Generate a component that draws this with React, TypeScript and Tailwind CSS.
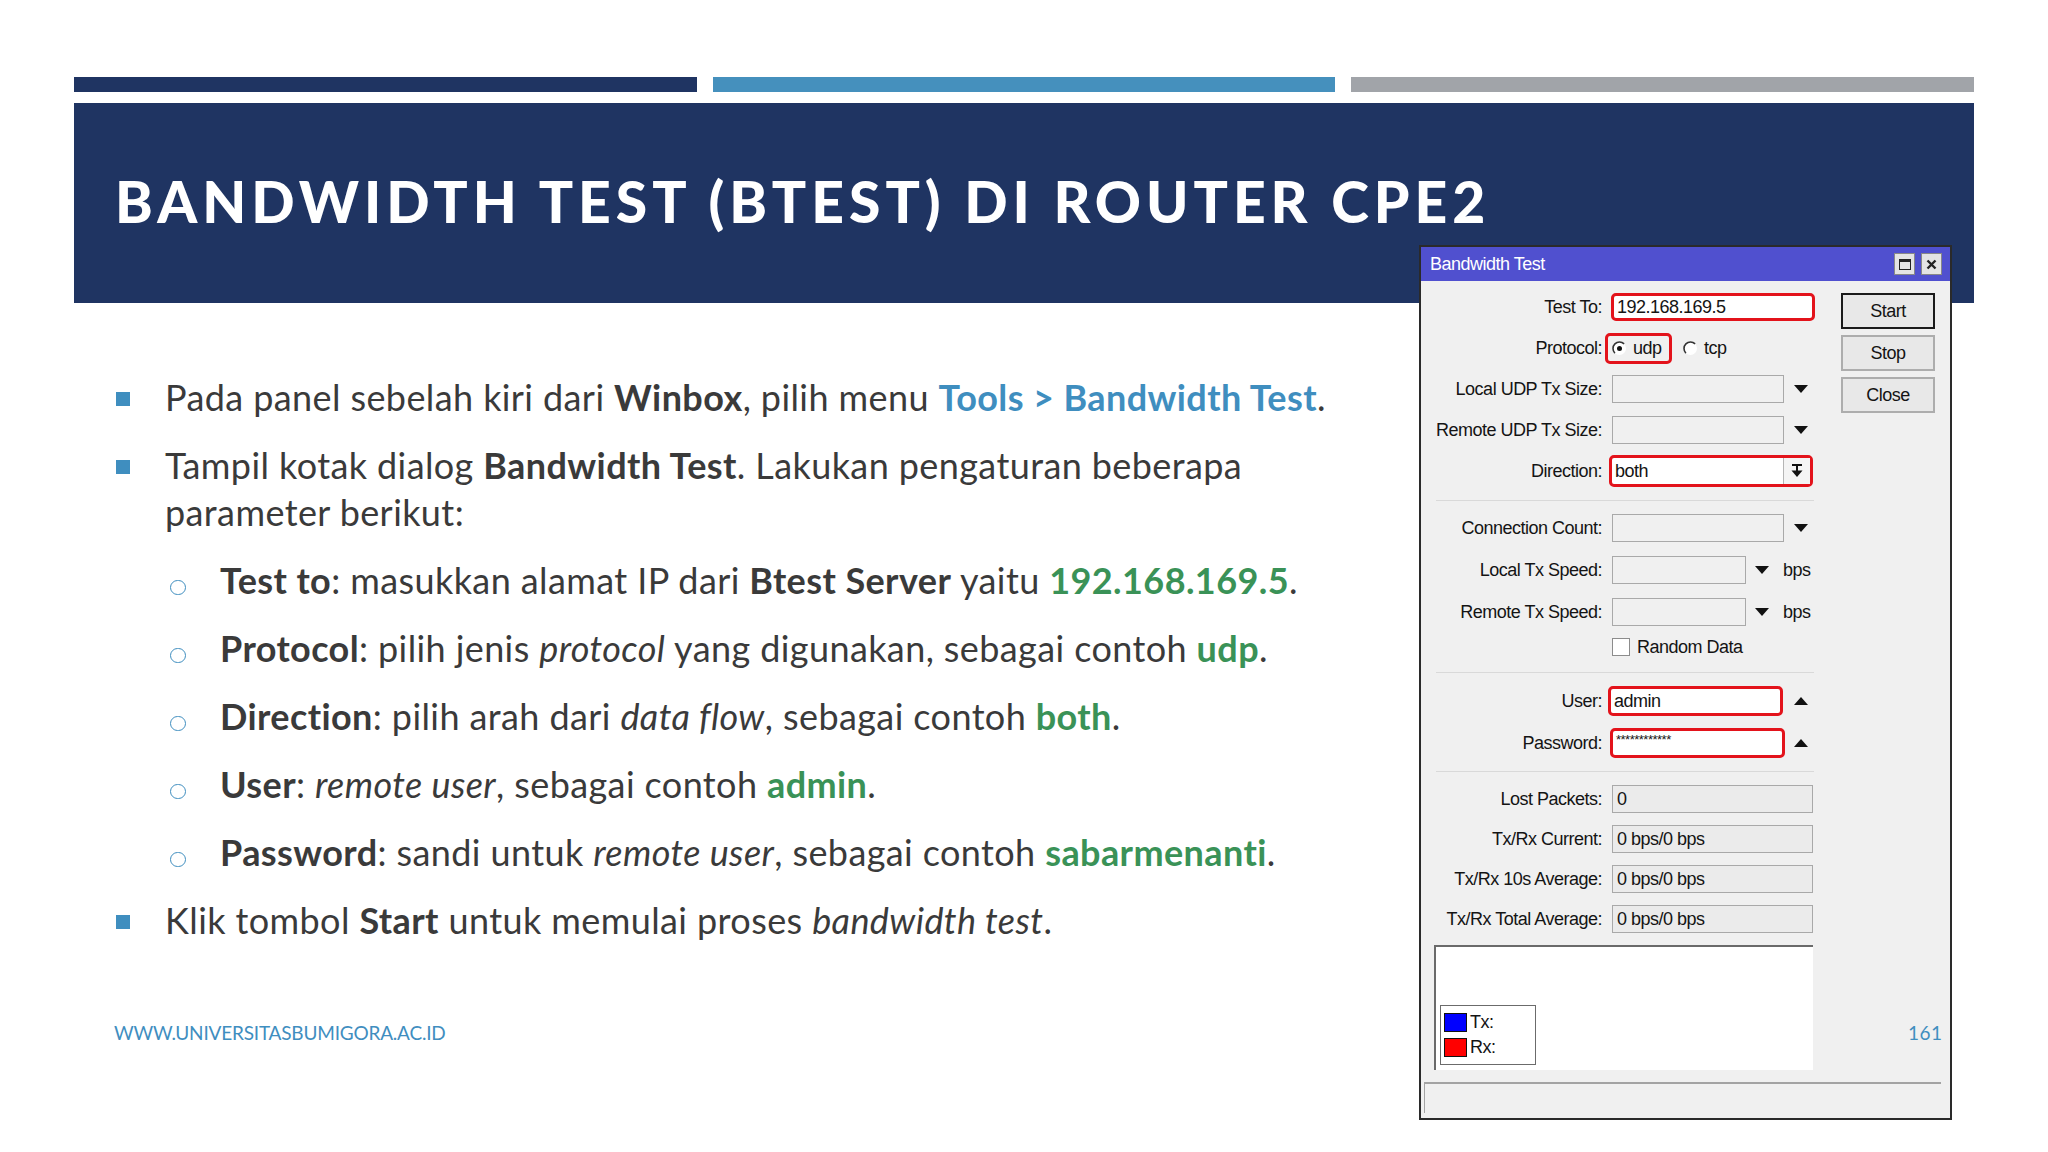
import type { ReactNode } from "react";

const sans = "font-['Lato','Open_Sans',sans-serif]";
const win = "font-['Liberation_Sans',Arial,sans-serif]";

function Bold({ children }: { children: ReactNode }) {
  return <span className="font-bold">{children}</span>;
}
function Green({ children }: { children: ReactNode }) {
  return <span className="font-bold text-[#3a9257]">{children}</span>;
}
function Blue({ children }: { children: ReactNode }) {
  return <span className="font-bold text-[#3f8ebf]">{children}</span>;
}

function Bullet({ children }: { children: ReactNode }) {
  return (
    <div className="flex mt-[21px] first:mt-0">
      <div className="w-[50px] h-[47px] flex items-center shrink-0">
        <span className="ml-[1px] mt-[2px] w-[14px] h-[14px] bg-[#3f8ebf]" />
      </div>
      <div className="whitespace-nowrap">{children}</div>
    </div>
  );
}

function SubBullet({ children }: { children: ReactNode }) {
  return (
    <div className="flex mt-[21px] pl-[55px]">
      <div className="w-[50px] h-[47px] shrink-0">
        <span className="block mt-[23px] w-[16px] h-[15px] rounded-full border-[1.5px] border-[#3f8ebf]" />
      </div>
      <div className="whitespace-nowrap">{children}</div>
    </div>
  );
}

function DownArrow() {
  return (
    <svg width="14" height="8" viewBox="0 0 14 8" className="shrink-0">
      <path d="M0 0H14L7 8Z" fill="#111" />
    </svg>
  );
}
function UpArrow() {
  return (
    <svg width="14" height="8" viewBox="0 0 14 8" className="shrink-0">
      <path d="M0 8H14L7 0Z" fill="#111" />
    </svg>
  );
}

function Row({
  label,
  children,
  className = "mt-[13px]",
  h = "h-[28px]",
}: {
  label: string;
  children?: ReactNode;
  className?: string;
  h?: string;
}) {
  return (
    <div className={`flex items-center ${h} ${className}`}>
      <div className="w-[166px] flex justify-end whitespace-nowrap shrink-0">{label}</div>
      <div className="ml-[10px] flex items-center flex-1 h-full">{children}</div>
    </div>
  );
}

function Field({ w, value, tone = "plain" }: { w: string; value?: string; tone?: "plain" | "ro" }) {
  return (
    <div
      className={`${w} h-[28px] border-[1.5px] border-[#a9a9a9] flex items-center pl-[4px] whitespace-nowrap ${
        tone === "ro" ? "bg-[#ebebeb]" : "bg-[#f0f0f0]"
      }`}
    >
      {value}
    </div>
  );
}

function Radio({ on }: { on?: boolean }) {
  return (
    <svg width="15" height="15" viewBox="0 0 15 15" className="shrink-0">
      <circle cx="7.5" cy="7.5" r="6.5" fill="#fff" />
      <path d="M2.9 12.1A6.5 6.5 0 0 1 12.1 2.9" fill="none" stroke="#333" strokeWidth="1.6" />
      {on && <circle cx="7.5" cy="7.5" r="2.5" fill="#111" />}
    </svg>
  );
}

function WinButton({ label, primary }: { label: string; primary?: boolean }) {
  return (
    <div
      className={`w-[94px] h-[36px] flex items-center justify-center bg-[#e8e8e8] ${
        primary ? "border-2 border-[#1b1b1b]" : "border-2 border-[#adadad]"
      }`}
    >
      {label}
    </div>
  );
}

function Separator() {
  return <div className="h-[1px] bg-[#d9d9d9]" />;
}

function BandwidthDialog() {
  return (
    <div
      className={`absolute left-[1419px] top-[245px] w-[533px] h-[875px] border-2 border-[#2a2a2a] bg-[#f0f0f0] flex flex-col ${win} text-[18px] tracking-[-0.5px] text-[#141414]`}
    >
      <div className="h-[34px] bg-[#5050cf] flex items-center pl-[9px] pr-[8px] shrink-0">
        <span className="text-white text-[18px]">Bandwidth Test</span>
        <div className="ml-auto flex gap-[6px]">
          <div className="w-[21px] h-[22px] bg-[#e4e4e4] border border-[#888] flex items-center justify-center">
            <div className="w-[12px] h-[11px] border-[1.5px] border-t-[3px] border-[#222]" />
          </div>
          <div className="w-[21px] h-[22px] bg-[#e4e4e4] border border-[#888] flex items-center justify-center">
            <svg width="11" height="11" viewBox="0 0 11 11">
              <path d="M1.5 1.5L9.5 9.5M9.5 1.5L1.5 9.5" stroke="#222" strokeWidth="2.4" />
            </svg>
          </div>
        </div>
      </div>

      <div className="flex pl-[15px] pt-[12px]">
        <div className="w-[378px]">
          <Row label="Test To:" className="">
            <div className="-ml-[1px] w-[204px] h-[28px] border-[3px] border-[#e3131b] rounded-[5px] bg-white flex items-center pl-[3px]">
              192.168.169.5
            </div>
          </Row>
          <Row label="Protocol:">
            <div className="-ml-[7px] h-[31px] w-[67px] border-[3px] border-[#e3131b] rounded-[5px] flex items-center pl-[4px] gap-[6px]">
              <Radio on />
              <span>udp</span>
            </div>
            <div className="ml-[11px] flex items-center gap-[6px]">
              <Radio />
              <span>tcp</span>
            </div>
          </Row>
          <Row label="Local UDP Tx Size:">
            <Field w="w-[172px]" />
            <span className="ml-[10px]">
              <DownArrow />
            </span>
          </Row>
          <Row label="Remote UDP Tx Size:">
            <Field w="w-[172px]" />
            <span className="ml-[10px]">
              <DownArrow />
            </span>
          </Row>
          <Row label="Direction:">
            <div className="-ml-[3px] w-[204px] h-[32px] border-[3px] border-[#e3131b] rounded-[5px] bg-white flex items-stretch">
              <span className="flex-1 flex items-center pl-[3px]">both</span>
              <span className="w-[27px] border-l border-[#b5b5b5] bg-[#f4f4f4] flex items-center justify-center">
                <svg width="12" height="14" viewBox="0 0 12 14">
                  <rect x="1" y="0" width="10" height="2" fill="#111" />
                  <rect x="5" y="2" width="2" height="6" fill="#111" />
                  <path d="M0.5 6.5H11.5L6 13Z" fill="#111" />
                </svg>
              </span>
            </div>
          </Row>
          <div className="mt-[15px]">
            <Separator />
          </div>
          <Row label="Connection Count:">
            <Field w="w-[172px]" />
            <span className="ml-[10px]">
              <DownArrow />
            </span>
          </Row>
          <Row label="Local Tx Speed:" className="mt-[14px]">
            <Field w="w-[134px]" />
            <span className="ml-[9px]">
              <DownArrow />
            </span>
            <span className="ml-[14px]">bps</span>
          </Row>
          <Row label="Remote Tx Speed:" className="mt-[14px]">
            <Field w="w-[134px]" />
            <span className="ml-[9px]">
              <DownArrow />
            </span>
            <span className="ml-[14px]">bps</span>
          </Row>
          <Row label="" className="mt-[11px]" h="h-[20px]">
            <span className="w-[18px] h-[18px] border border-[#8c8c8c] bg-white" />
            <span className="ml-[7px]">Random Data</span>
          </Row>
          <div className="mt-[15px]">
            <Separator />
          </div>
          <Row label="User:" className="mt-[13px]" h="h-[30px]">
            <div className="-ml-[4px] w-[175px] h-[30px] border-[3px] border-[#e3131b] rounded-[5px] bg-white flex items-center pl-[3px]">
              admin
            </div>
            <span className="ml-[11px]">
              <UpArrow />
            </span>
          </Row>
          <Row label="Password:" className="mt-[12px]" h="h-[30px]">
            <div className="-ml-[2px] w-[175px] h-[30px] border-[3px] border-[#e3131b] rounded-[5px] bg-white flex items-start pl-[3px] pt-[2px] text-[13px] leading-[14px] tracking-[-0.5px]">
              ************
            </div>
            <span className="ml-[9px]">
              <UpArrow />
            </span>
          </Row>
          <div className="mt-[13px]">
            <Separator />
          </div>
          <Row label="Lost Packets:">
            <Field w="w-[201px]" value="0" tone="ro" />
          </Row>
          <Row label="Tx/Rx Current:" className="mt-[12px]">
            <Field w="w-[201px]" value="0 bps/0 bps" tone="ro" />
          </Row>
          <Row label="Tx/Rx 10s Average:" className="mt-[12px]">
            <Field w="w-[201px]" value="0 bps/0 bps" tone="ro" />
          </Row>
          <Row label="Tx/Rx Total Average:" className="mt-[12px]">
            <Field w="w-[201px]" value="0 bps/0 bps" tone="ro" />
          </Row>
          <div className="-ml-[2px] mt-[12px] w-[379px] h-[125px] bg-white border-t-2 border-l-2 border-[#6a6a6a] flex flex-col justify-end pl-[4px] pb-[5px]">
            <div className="w-[96px] h-[60px] border border-[#6b6b6b] bg-white flex flex-col justify-center gap-[5px] pl-[3px] text-[18px]">
              <div className="flex items-center h-[20px]">
                <span className="w-[23px] h-[19px] bg-[#0000ff] border border-[#111]" />
                <span className="ml-[3px]">Tx:</span>
              </div>
              <div className="flex items-center h-[20px]">
                <span className="w-[23px] h-[19px] bg-[#ff0000] border border-[#111]" />
                <span className="ml-[3px]">Rx:</span>
              </div>
            </div>
          </div>
        </div>

        <div className="ml-[27px] flex flex-col gap-[6px]">
          <WinButton label="Start" primary />
          <WinButton label="Stop" />
          <WinButton label="Close" />
        </div>
      </div>

      <div className="ml-[3px] mr-[9px] mt-[12px] h-[31px] border-t-2 border-l border-[#a3a3a3] bg-[#f0f0f0]" />
    </div>
  );
}

export default function App() {
  return (
    <div className={`relative w-[2048px] h-[1152px] bg-white overflow-hidden ${sans} text-[#3a3a3a]`}>
      <div className="pt-[77px] px-[74px]">
        <div className="grid grid-cols-3 gap-[16px]">
          <div className="h-[15px] bg-[#1f3462]" />
          <div className="h-[15px] bg-[#4590bd]" />
          <div className="h-[15px] bg-[#a1a4a9]" />
        </div>
        <div className="mt-[11px] h-[200px] bg-[#1f3462] pl-[41px] pt-[71px]">
          <h1 className="text-white font-black text-[57px] leading-[54px] tracking-[5px] whitespace-nowrap">
            BANDWIDTH TEST (BTEST) DI ROUTER CPE2
          </h1>
        </div>
      </div>

      <div className="pl-[115px] mt-[71px] text-[36px] leading-[47px] tracking-[0.4px]">
        <Bullet>
          Pada panel sebelah kiri dari <Bold>Winbox</Bold>, pilih menu <Blue>Tools &gt; Bandwidth Test</Blue>.
        </Bullet>
        <Bullet>
          Tampil kotak dialog <Bold>Bandwidth Test</Bold>. Lakukan pengaturan beberapa
          <br />
          parameter berikut:
        </Bullet>
        <SubBullet>
          <Bold>Test to</Bold>: masukkan alamat IP dari <Bold>Btest Server</Bold> yaitu <Green>192.168.169.5</Green>.
        </SubBullet>
        <SubBullet>
          <Bold>Protocol</Bold>: pilih jenis <i>protocol</i> yang digunakan, sebagai contoh <Green>udp</Green>.
        </SubBullet>
        <SubBullet>
          <Bold>Direction</Bold>: pilih arah dari <i>data flow</i>, sebagai contoh <Green>both</Green>.
        </SubBullet>
        <SubBullet>
          <Bold>User</Bold>: <i>remote user</i>, sebagai contoh <Green>admin</Green>.
        </SubBullet>
        <SubBullet>
          <Bold>Password</Bold>: sandi untuk <i>remote user</i>, sebagai contoh <Green>sabarmenanti</Green>.
        </SubBullet>
        <Bullet>
          Klik tombol <Bold>Start</Bold> untuk memulai proses <i>bandwidth test</i>.
        </Bullet>
      </div>

      <div className="absolute left-[114px] top-[1019px] text-[19px] text-[#3f8ebf] tracking-[-0.2px]">
        WWW.UNIVERSITASBUMIGORA.AC.ID
      </div>

      <BandwidthDialog />

      <div className="absolute left-[1908px] top-[1019px] text-[19px] text-[#3f8ebf] tracking-[0.5px]">161</div>
    </div>
  );
}
